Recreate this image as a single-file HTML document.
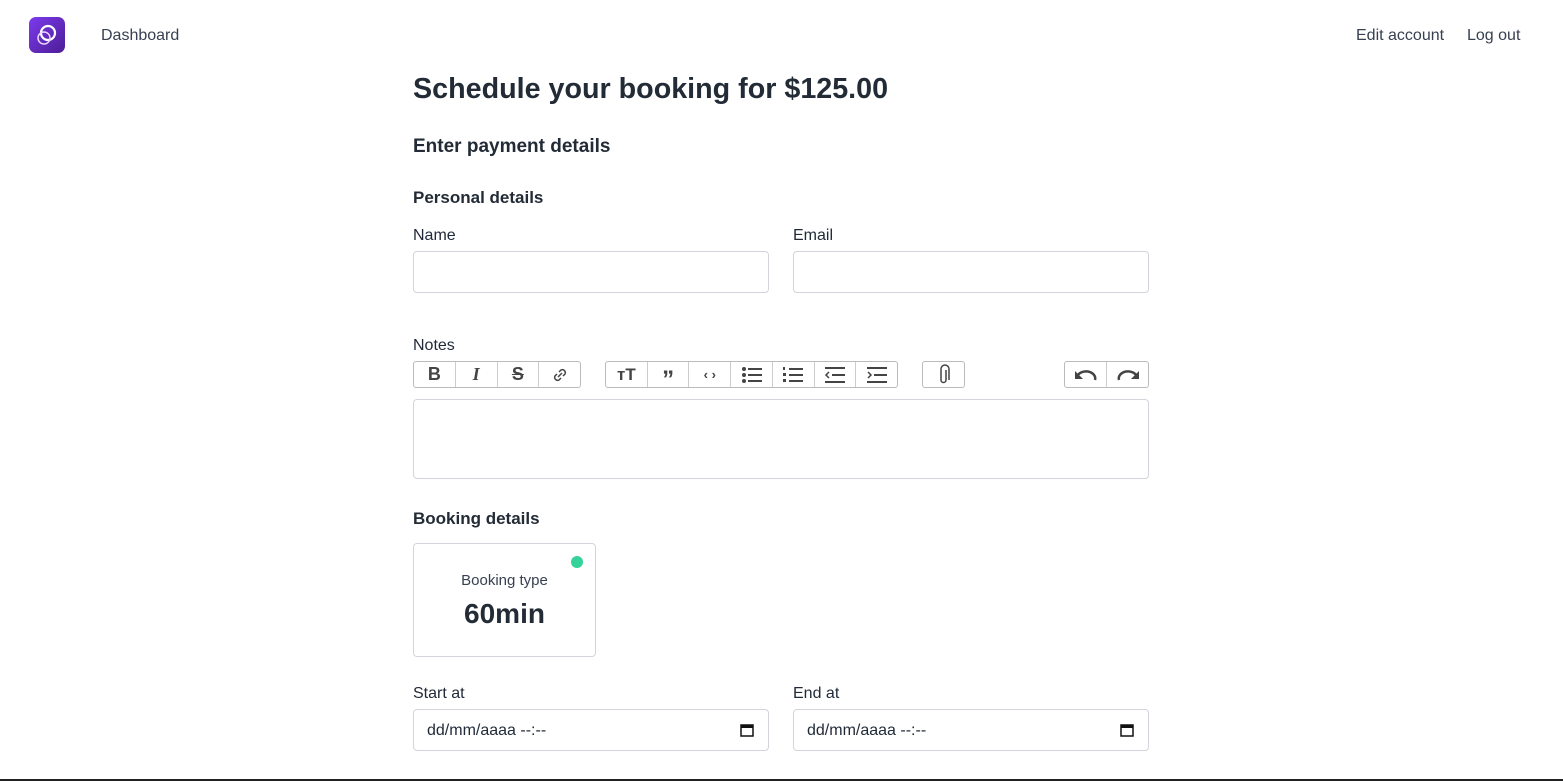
<!DOCTYPE html>
<html><head><meta charset="utf-8"><style>
*{box-sizing:border-box;margin:0;padding:0}
body{width:1563px;height:781px;overflow:hidden;background:#fff;font-family:"Liberation Sans","DejaVu Sans",sans-serif;color:#222b36;position:relative}
.abs{position:absolute}
.nav{font-size:16px;color:#374151}
.inp{position:absolute;height:42px;border:1px solid #d1d5db;border-radius:4px;background:#fff}
.lbl{position:absolute;font-size:16px;color:#1f2937}
.grp{position:absolute;top:361px;height:27px;border:1px solid #bbb;border-radius:3px;display:flex;background:#fff}
.grp div{flex:1;border-left:1px solid #ccc;display:flex;align-items:center;justify-content:center}
.grp div:first-child{border-left:none}
svg{display:block}
</style></head><body>
<div class="abs" style="left:29px;top:17px;width:36px;height:36px;border-radius:7px;background:linear-gradient(135deg,#7c3aed,#4c1d95)">
<svg width="36" height="36"><circle cx="19" cy="16" r="7" fill="none" stroke="#fff" stroke-width="2.2"/><circle cx="15" cy="21" r="6" fill="none" stroke="#e9d5ff" stroke-width="1.5"/></svg></div>
<div class="abs nav" style="left:101px;top:27px">Dashboard</div>
<div class="abs nav" style="left:1356px;top:27px">Edit account</div>
<div class="abs nav" style="left:1467px;top:27px">Log out</div>
<div class="abs" style="left:413px;top:73px;font-size:28.7px;font-weight:bold">Schedule your booking for $125.00</div>
<div class="abs" style="left:413px;top:136px;font-size:19px;font-weight:bold">Enter payment details</div>
<div class="abs" style="left:413px;top:188px;font-size:17px;font-weight:bold">Personal details</div>
<div class="lbl" style="left:413px;top:227px">Name</div>
<div class="lbl" style="left:793px;top:227px">Email</div>
<div class="inp" style="left:413px;top:251px;width:356px"></div>
<div class="inp" style="left:793px;top:251px;width:356px"></div>
<div class="lbl" style="left:413px;top:337px">Notes</div>
<div class="grp" style="left:413px;width:168px">
<div style="font-weight:bold;font-size:18px;color:#444">B</div>
<div style="font-style:italic;font-weight:bold;font-size:18px;color:#444;font-family:'Liberation Serif',serif">I</div>
<div style="font-weight:bold;font-size:18px;color:#444;text-decoration:line-through">S</div>
<div><svg width="20" height="20" viewBox="0 0 20 20"><path d="M8 12l4-4M9 7l2-2a3 3 0 014 4l-2 2M11 13l-2 2a3 3 0 01-4-4l2-2" fill="none" stroke="#444" stroke-width="1.5"/></svg></div>
</div>
<div class="grp" style="left:605px;width:293px">
<div style="font-weight:bold;color:#444;font-size:17px">ᴛT</div>
<div style="font-weight:bold;color:#444;font-size:24px;line-height:10px;padding-top:10px">”</div>
<div style="font-weight:bold;color:#444;font-size:13px">‹ ›</div>
<div><svg width="22" height="18"><g fill="#444"><circle cx="3" cy="3" r="2"/><circle cx="3" cy="9" r="2"/><circle cx="3" cy="15" r="2"/><rect x="7" y="2" width="14" height="2"/><rect x="7" y="8" width="14" height="2"/><rect x="7" y="14" width="14" height="2"/></g></svg></div>
<div><svg width="22" height="18"><g fill="#444"><rect x="1" y="1" width="2" height="3"/><rect x="1" y="7" width="3" height="3"/><rect x="1" y="13" width="3" height="3"/><rect x="7" y="2" width="14" height="2"/><rect x="7" y="8" width="14" height="2"/><rect x="7" y="14" width="14" height="2"/></g></svg></div>
<div><svg width="22" height="18"><g fill="#444"><rect x="1" y="1" width="20" height="2"/><rect x="8" y="8" width="13" height="2"/><rect x="1" y="15" width="20" height="2"/></g><path d="M5 6l-3 3 3 3" fill="none" stroke="#444" stroke-width="1.5"/></svg></div>
<div><svg width="22" height="18"><g fill="#444"><rect x="1" y="1" width="20" height="2"/><rect x="8" y="8" width="13" height="2"/><rect x="1" y="15" width="20" height="2"/></g><path d="M2 6l3 3-3 3" fill="none" stroke="#444" stroke-width="1.5"/></svg></div>
</div>
<div class="grp" style="left:922px;width:43px"><div><svg width="14" height="22" viewBox="0 0 14 22"><path d="M9 6v10a2.5 2.5 0 01-5 0V5a4 4 0 018 0v11" fill="none" stroke="#444" stroke-width="1.5"/></svg></div></div>
<div class="grp" style="left:1064px;width:85px">
<div><svg width="24" height="16"><path d="M3 10a9 7 0 0118 3" fill="none" stroke="#444" stroke-width="2.5"/><path d="M1 4v8h8z" fill="#444"/></svg></div>
<div><svg width="24" height="16"><path d="M21 10a9 7 0 00-18 3" fill="none" stroke="#444" stroke-width="2.5"/><path d="M23 4v8h-8z" fill="#444"/></svg></div>
</div>
<div class="inp" style="left:413px;top:399px;width:736px;height:80px"></div>
<div class="abs" style="left:413px;top:509px;font-size:17px;font-weight:bold">Booking details</div>
<div class="abs" style="left:413px;top:543px;width:183px;height:114px;border:1px solid #d1d5db;border-radius:4px">
<div class="abs" style="left:157px;top:12px;width:12px;height:12px;border-radius:50%;background:#34d399"></div>
<div class="abs" style="left:0;width:100%;top:28px;text-align:center;font-size:15px;color:#374151">Booking type</div>
<div class="abs" style="left:0;width:100%;top:54px;text-align:center;font-size:28px;font-weight:bold">60min</div>
</div>
<div class="lbl" style="left:413px;top:685px">Start at</div>
<div class="lbl" style="left:793px;top:685px">End at</div>
<div class="inp" style="left:413px;top:709px;width:356px;padding:12px 13px 0;font-size:16px;color:#1f2937">dd/mm/aaaa --:--<svg class="abs" style="right:14px;top:13px" width="14" height="14"><rect x="1" y="2" width="12" height="11" fill="none" stroke="#111" stroke-width="1.5"/><rect x="1" y="2" width="12" height="3" fill="#111"/></svg></div>
<div class="inp" style="left:793px;top:709px;width:356px;padding:12px 13px 0;font-size:16px;color:#1f2937">dd/mm/aaaa --:--<svg class="abs" style="right:14px;top:13px" width="14" height="14"><rect x="1" y="2" width="12" height="11" fill="none" stroke="#111" stroke-width="1.5"/><rect x="1" y="2" width="12" height="3" fill="#111"/></svg></div>
<div class="abs" style="left:0;top:779px;width:1563px;height:2px;background:#222"></div>
</body></html>
